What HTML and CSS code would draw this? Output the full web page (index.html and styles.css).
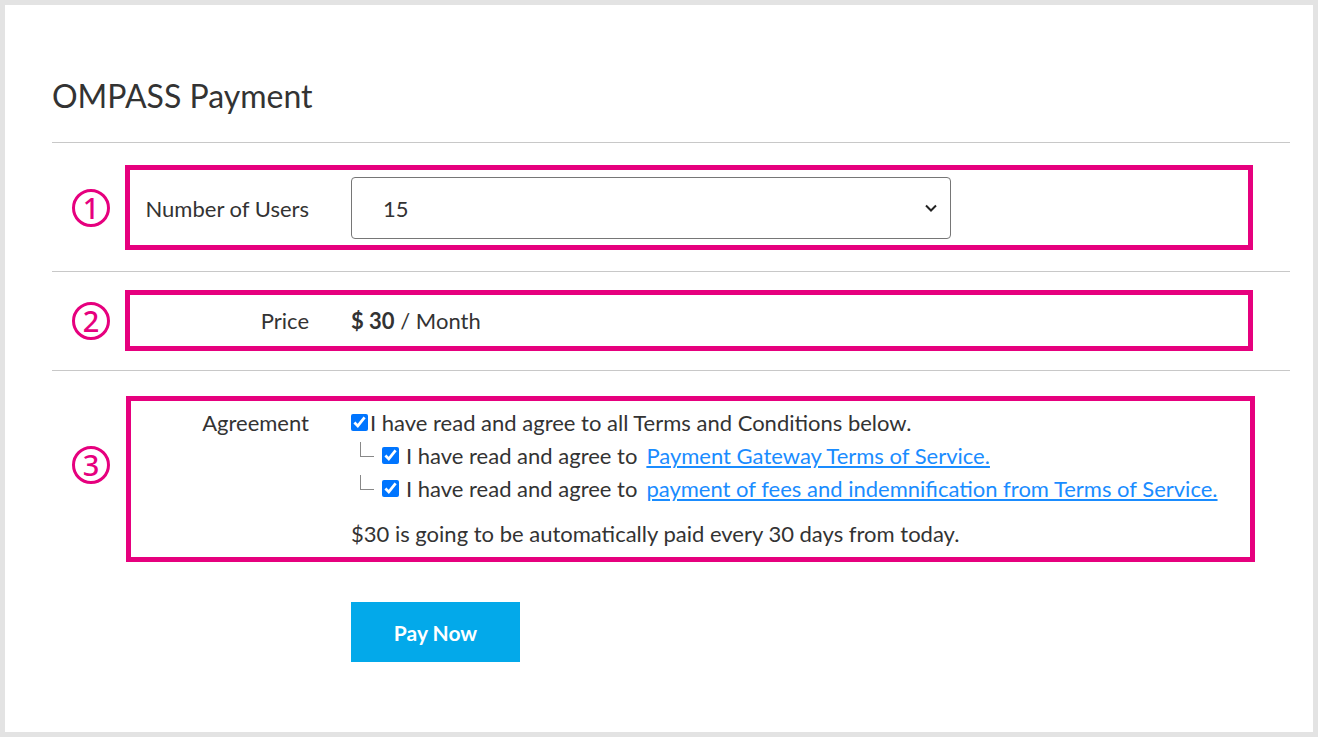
FILE: index.html
```html
<!DOCTYPE html>
<html>
<head>
<meta charset="utf-8">
<link rel="stylesheet" href="styles.css">
</head>
<body>
<div class="frame">
  <div class="page">
    <h1 class="title">OMPASS Payment</h1>
    <hr class="rule">
    <div class="row row-users">
      <div class="marker"><span class="num">1</span></div>
      <div class="box box-users">
        <div class="label">Number of Users</div>
        <div class="value">
          <div class="select">
            <span>15</span>
            <svg class="chev" width="14" height="10" viewBox="0 0 14 10"><path d="M2 2.5 L7 7.5 L12 2.5" fill="none" stroke="#222" stroke-width="2"/></svg>
          </div>
        </div>
      </div>
    </div>
    <hr class="rule">
    <div class="row row-price">
      <div class="marker"><span class="num">2</span></div>
      <div class="box box-price">
        <div class="label">Price</div>
        <div class="value"><b>$ 30</b> / Month</div>
      </div>
    </div>
    <hr class="rule">
    <div class="row row-agree">
      <div class="marker marker-agree"><span class="num">3</span></div>
      <div class="box box-agree">
        <div class="label">Agreement</div>
        <div class="value agree-list">
          <label class="line"><input type="checkbox" checked>I have read and agree to all Terms and Conditions below.</label>
          <label class="line sub"><span class="tree"></span><input type="checkbox" checked>I have read and agree to <a href="#">Payment Gateway Terms of Service.</a></label>
          <label class="line sub"><span class="tree"></span><input type="checkbox" checked>I have read and agree to <a href="#">payment of fees and indemnification from Terms of Service.</a></label>
          <p class="note">$30 is going to be automatically paid every 30 days from today.</p>
        </div>
      </div>
    </div>
    <div class="actions">
      <button class="pay">Pay Now</button>
    </div>
  </div>
</div>
</body>
</html>
```
FILE: styles.css
```css
html, body {
  margin: 0;
  padding: 0;
}
body {
  font-family: "Lato", "Noto Sans", sans-serif;
  color: #333;
  background: #fff;
}
.frame {
  width: 1318px;
  height: 737px;
  box-sizing: border-box;
  border: 5px solid #e3e3e3;
  background: #fff;
}
.page {
  padding: 0 23px 0 47px;
}
.title {
  margin: 0;
  padding-top: 71px;
  height: 66px;
  box-sizing: content-box;
  font-size: 32px;
  font-weight: 400;
  line-height: 40px;
  color: #333;
}
.rule {
  margin: 0;
  border: 0;
  border-top: 1px solid #c8c8c8;
  height: 0;
}
.row {
  display: flex;
  align-items: center;
}
.row-users { padding: 22px 0 21px; }
.row-price { padding: 18px 0 19px; }
.row-agree { padding: 25px 0 0; }
.marker {
  width: 73px;
  display: flex;
  justify-content: center;
  padding-left: 5px;
  box-sizing: border-box;
}
.marker-agree {
  align-self: flex-start;
  padding-top: 50px;
}
.num {
  width: 38px;
  height: 38px;
  box-sizing: border-box;
  border: 3px solid #e6007e;
  border-radius: 50%;
  color: #e6007e;
  font-family: "Noto Sans", sans-serif;
  font-size: 29px;
  line-height: 31px;
  text-align: center;
  font-weight: 500;
}
.box {
  flex: 1;
  margin-right: 37px;
  border: 5px solid #e6007e;
  display: flex;
  align-items: center;
}
.box-users { padding: 7px 0 6px; }
.box-price { height: 61px; box-sizing: border-box; }
.box-agree { align-items: flex-start; padding: 5px 0 7px; margin-right: 35px; margin-left: 1px; }
.label {
  width: 179px;
  text-align: right;
  font-size: 22px;
  flex-shrink: 0;
}
.box-agree .label { line-height: 33px; width: 178px; }
.value {
  margin-left: 42px;
  font-size: 22px;
}
.value b { font-weight: 700; }
.select {
  width: 600px;
  height: 62px;
  box-sizing: border-box;
  border: 1px solid #767676;
  border-radius: 4px;
  display: flex;
  align-items: center;
  justify-content: space-between;
  padding: 0 12px 0 31px;
  font-size: 22px;
}
.agree-list {
  display: flex;
  flex-direction: column;
}
.line {
  display: flex;
  align-items: center;
  height: 33px;
  white-space: nowrap;
}
.line input {
  width: 17px;
  height: 17px;
  margin: 0 2px 0 0;
  accent-color: #0075ff;
}
.sub {
  padding-left: 9px;
}
.sub input { margin-right: 7px; }
.tree {
  width: 14px;
  height: 15px;
  border-left: 1px solid #888;
  border-bottom: 1px solid #888;
  margin-right: 8px;
  margin-top: -12px;
  box-sizing: border-box;
}
.line a {
  color: #1a8cff;
  text-decoration: underline;
  margin-left: 9px;
}
.note {
  margin: 12px 0 0;
  line-height: 33px;
}
.actions {
  padding: 40px 0 0 299px;
}
.pay {
  width: 169px;
  height: 60px;
  border: 0;
  background: #03a9ea;
  color: #fff;
  font-family: inherit;
  font-size: 21px;
  font-weight: 700;
  cursor: pointer;
}
```
